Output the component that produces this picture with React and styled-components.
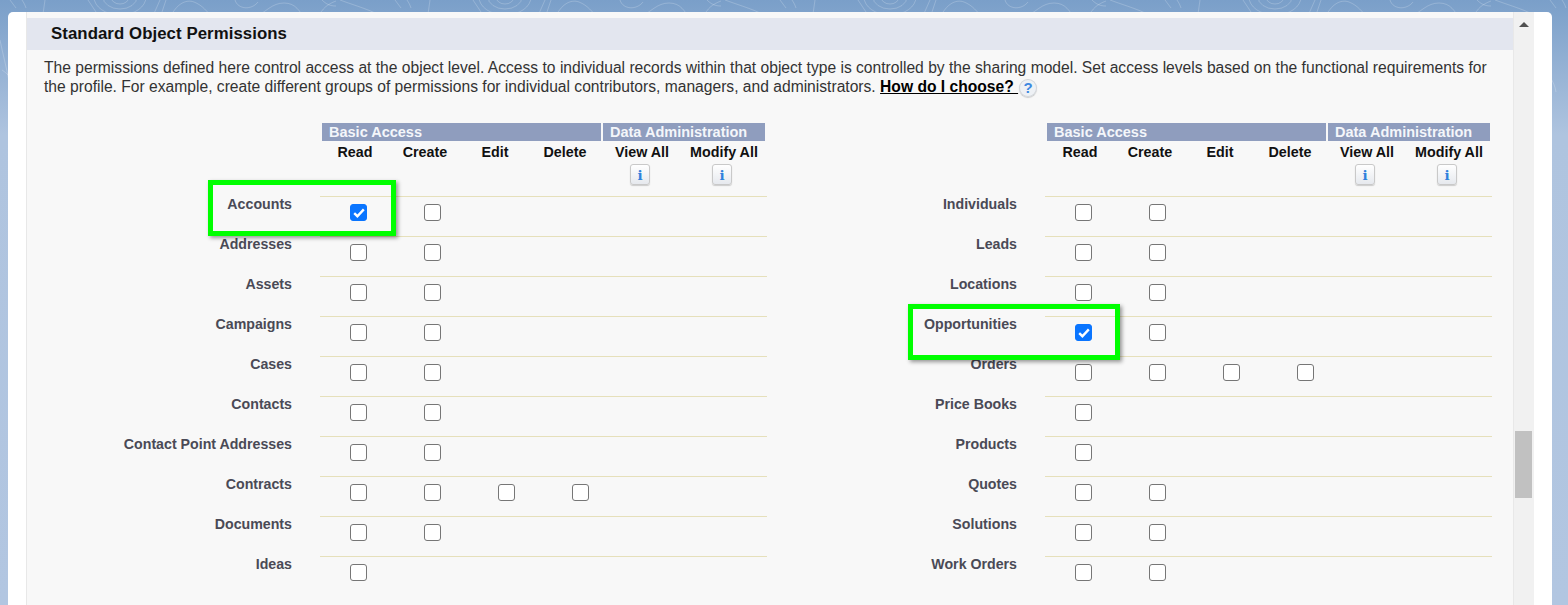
import styled, { createGlobalStyle } from 'styled-components';

const LEFT_ROWS = [
  { name: 'Accounts', boxes: 2, checked: true },
  { name: 'Addresses', boxes: 2 },
  { name: 'Assets', boxes: 2 },
  { name: 'Campaigns', boxes: 2 },
  { name: 'Cases', boxes: 2 },
  { name: 'Contacts', boxes: 2 },
  { name: 'Contact Point Addresses', boxes: 2 },
  { name: 'Contracts', boxes: 4 },
  { name: 'Documents', boxes: 2 },
  { name: 'Ideas', boxes: 1 },
];

const RIGHT_ROWS = [
  { name: 'Individuals', boxes: 2 },
  { name: 'Leads', boxes: 2 },
  { name: 'Locations', boxes: 2 },
  { name: 'Opportunities', boxes: 2, checked: true },
  { name: 'Orders', boxes: 4 },
  { name: 'Price Books', boxes: 1 },
  { name: 'Products', boxes: 1 },
  { name: 'Quotes', boxes: 2 },
  { name: 'Solutions', boxes: 2 },
  { name: 'Work Orders', boxes: 2 },
];

const BASIC_COLUMNS = ['Read', 'Create', 'Edit', 'Delete'];
const ADMIN_COLUMNS = ['View All', 'Modify All'];

const PermissionTable = ({ rows, highlight }) => (
  <TableWrap>
    <GroupRow>
      <GroupCell $width={279}>Basic Access</GroupCell>
      <GroupCell $width={162}>Data Administration</GroupCell>
    </GroupRow>
    <ColumnRow>
      {BASIC_COLUMNS.map((column) => (
        <ColumnName key={column} $width={70}>
          {column}
        </ColumnName>
      ))}
      <AdminSpacer />
      {ADMIN_COLUMNS.map((column) => (
        <ColumnName key={column} $width={82}>
          {column}
          <InfoButton>i</InfoButton>
        </ColumnName>
      ))}
    </ColumnRow>
    {rows.map((row) => (
      <Row key={row.name}>
        <RowLabel>{row.name}</RowLabel>
        <BoxCells>
          {Array.from({ length: row.boxes }, (_, index) => (
            <CheckBox key={index} $checked={row.checked && index === 0}>
              {row.checked && index === 0 && (
                <svg width="12" height="10" viewBox="0 0 12 10">
                  <path d="M1.2 5.2 L4.4 8.2 L10.8 1.4" fill="none" stroke="#fff" strokeWidth="2.4" />
                </svg>
              )}
            </CheckBox>
          ))}
        </BoxCells>
      </Row>
    ))}
    {highlight}
  </TableWrap>
);

const App = () => (
  <>
    <GlobalStyle />
    <Page>
      <Backdrop>
        <defs>
          <pattern id="contours" width="385" height="300" patternUnits="userSpaceOnUse">
            <g fill="none" stroke="#fff" strokeOpacity="0.2" strokeWidth="1">
              <path d="M10 0L16 8M45 0L43 14M22 0C24 3 25 5 26 8" />
              <ellipse cx="120" cy="-3" rx="26" ry="18" />
              <ellipse cx="120" cy="-3" rx="17" ry="12" />
              <ellipse cx="120" cy="-3" rx="9" ry="7" />
              <path d="M88 0L100 18M152 18L160 0M160 18L166 0" />
              <path d="M170 18C176 4 186 -1 194 2C202 5 208 12 212 18" />
              <path d="M235 0C238 10 252 10 258 2" />
              <path d="M254 18C266 12 272 3 284 3C296 3 300 12 304 18" />
              <path d="M318 18C322 8 328 4 336 1M322 0C326 4 330 6 336 6M340 0C356 6 372 10 384 18" />
              <path d="M0 40C6 70 14 90 10 120M370 40C380 60 384 80 378 110" />
              <path d="M2 70C8 74 14 80 16 92M368 90C376 94 382 102 384 114" />
            </g>
          </pattern>
        </defs>
        <rect width="1568" height="130" fill="url(#contours)" />
      </Backdrop>
      <Card>
        <Content>
          <SectionHeader>
            <SectionTitle>Standard Object Permissions</SectionTitle>
          </SectionHeader>
          <Intro>
            The permissions defined here control access at the object level. Access to individual
            records within that object type is controlled by the sharing model. Set access levels
            based on the functional requirements for the profile. For example, create different
            groups of permissions for individual contributors, managers, and administrators.{' '}
            <HelpLink>How do I choose? </HelpLink>
            <HelpIcon>?</HelpIcon>
          </Intro>
          <Tables>
            <PermissionTable rows={LEFT_ROWS} highlight={<AccountsBox />} />
            <PermissionTable rows={RIGHT_ROWS} highlight={<OpportunitiesBox />} />
          </Tables>
        </Content>
        <ScrollTrack>
          <ScrollArrow />
          <ScrollThumb />
        </ScrollTrack>
      </Card>
    </Page>
  </>
);

const GlobalStyle = createGlobalStyle`
  html, body {
    margin: 0;
    height: 100%;
    overflow: hidden;
  }
  body {
    font-family: "Liberation Sans", Arial, sans-serif;
  }
`;

const Page = styled.div`
  position: relative;
  height: 605px;
  padding: 12px 16px 0 8px;
  box-sizing: border-box;
  background: linear-gradient(180deg, #7a9fc9 0, #afc4df 135px, #b2c6e1 100%);
  overflow: hidden;
`;

const Backdrop = styled.svg`
  position: absolute;
  inset: 0;
  width: 100%;
  height: 100%;
`;

const Card = styled.div`
  position: relative;
  display: flex;
  height: 593px;
  padding: 0 18px;
  box-sizing: border-box;
  background: #fff;
  border-radius: 5px 5px 0 0;
`;

const Content = styled.div`
  width: 1487px;
  height: 593px;
  padding-top: 6px;
  overflow: hidden;
  background: #f8f8f8;
  border-left: 1px solid #e8e8e8;
  box-sizing: border-box;
`;

const SectionHeader = styled.div`
  height: 32px;
  display: flex;
  align-items: center;
  padding-left: 24px;
  box-sizing: border-box;
  background: #e3e6ef;
`;

const SectionTitle = styled.h2`
  margin: 0;
  font-size: 16.8px;
  font-weight: bold;
  letter-spacing: 0.07px;
  color: #111;
`;

const Intro = styled.p`
  margin: 0;
  height: 73px;
  padding: 8px 20px 0 17px;
  box-sizing: border-box;
  font-size: 15.63px;
  line-height: 19px;
  color: #333;
`;

const HelpLink = styled.a`
  font-weight: bold;
  color: #000;
  text-decoration: underline;
`;

const HelpIcon = styled.span`
  display: inline-flex;
  align-items: center;
  justify-content: center;
  width: 18px;
  height: 18px;
  margin-left: 1px;
  vertical-align: -1px;
  border-radius: 50%;
  background: #eef1f5;
  box-shadow: inset 0 0 0 1px #d3d6da, 0 1px 1px #ccc;
  font-size: 15px;
  line-height: 18px;
  font-weight: bold;
  color: #3f88e0;
`;

const Tables = styled.div`
  display: flex;
`;

const TableWrap = styled.div`
  position: relative;
  width: 725px;
  flex: none;
`;

const GroupRow = styled.div`
  display: flex;
  gap: 2px;
  margin-left: 295px;
`;

const ColumnRow = styled.div`
  display: flex;
  height: 55px;
  margin-left: 293px;
`;

const GroupCell = styled.div`
  width: ${(props) => props.$width}px;
  flex: none;
  height: 18px;
  padding-left: 7px;
  box-sizing: border-box;
  background: #8f9dbe;
  color: #f4f6fa;
  font-size: 14.5px;
  line-height: 18px;
  font-weight: bold;
  white-space: nowrap;
`;

const ColumnName = styled.div`
  width: ${(props) => props.$width}px;
  flex: none;
  padding-top: 3px;
  display: flex;
  flex-direction: column;
  align-items: center;
  font-size: 14.3px;
  line-height: 16px;
  font-weight: bold;
  color: #111;
`;

const AdminSpacer = styled.div`
  width: 1px;
  flex: none;
`;

const InfoButton = styled.span`
  display: flex;
  align-items: center;
  justify-content: center;
  width: 20px;
  height: 21px;
  margin: 4px 4px 0 0;
  box-sizing: border-box;
  border: 1px solid #c9c9c9;
  border-radius: 3px;
  background: linear-gradient(#ffffff, #e6e9ee);
  box-shadow: 0 1px 1px #ccc;
  font-family: "DejaVu Serif", serif;
  font-size: 13.5px;
  font-weight: bold;
  color: #2f80dc;
`;

const Row = styled.div`
  display: flex;
  height: 40px;
`;

const RowLabel = styled.div`
  width: 265px;
  flex: none;
  text-align: right;
  font-size: 14.2px;
  line-height: 17px;
  font-weight: bold;
  color: #4a4a56;
`;

const BoxCells = styled.div`
  flex: none;
  width: 447px;
  margin-left: 28px;
  padding-left: 30px;
  box-sizing: border-box;
  display: flex;
  gap: 57px;
  border-top: 1px solid #e6e0bb;
`;

const CheckBox = styled.span`
  flex: none;
  width: 17px;
  height: 17px;
  margin-top: 7px;
  box-sizing: border-box;
  display: flex;
  align-items: center;
  justify-content: center;
  border-radius: 3px;
  border: 1px solid ${(props) => (props.$checked ? '#0a75ff' : '#767676')};
  background: ${(props) => (props.$checked ? '#0a75ff' : '#fff')};
`;

const Highlight = styled.div`
  position: absolute;
  box-sizing: border-box;
  border: 5px solid #00ff00;
  box-shadow: 2px 2px 4px rgba(0, 0, 0, 0.4);
  pointer-events: none;
`;

const AccountsBox = styled(Highlight)`
  left: 181px;
  top: 57px;
  width: 188px;
  height: 56px;
`;

const OpportunitiesBox = styled(Highlight)`
  left: 156px;
  top: 181px;
  width: 212px;
  height: 56px;
`;

const ScrollTrack = styled.div`
  position: relative;
  width: 21px;
  height: 593px;
  flex: none;
  background: #f1f1f1;
  border-left: 1px solid #e8e8e8;
  box-sizing: border-box;
`;

const ScrollArrow = styled.div`
  position: absolute;
  left: 5px;
  top: 10px;
  width: 0;
  height: 0;
  border-left: 5px solid transparent;
  border-right: 5px solid transparent;
  border-bottom: 5px solid #505050;
`;

const ScrollThumb = styled.div`
  position: absolute;
  left: 1px;
  top: 419px;
  width: 17px;
  height: 67px;
  background: #c1c1c1;
`;

export default App;
